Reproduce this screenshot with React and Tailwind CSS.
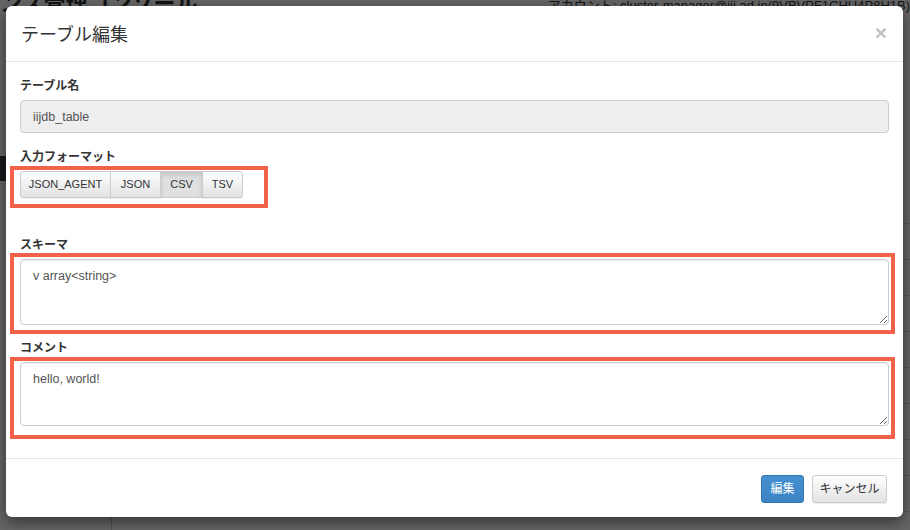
import React from 'react';

const font = { fontFamily: '"Liberation Sans", "Noto Sans CJK JP", sans-serif' };

const formats = [
  { name: 'JSON_AGENT', w: 'w-[91px]' },
  { name: 'JSON', w: 'w-[51px]' },
  { name: 'CSV', w: 'w-[43px]', active: true },
  { name: 'TSV', w: 'w-[41px]' },
];

// faded page that sits behind the modal backdrop
const BackgroundPage = () => (
  <div className="flex flex-col w-full h-full bg-white text-[#333]">
    <div className="flex justify-between items-start h-[40px]">
      <div className="-mt-[13px] text-[22px] font-bold whitespace-nowrap">ンス管理コンソール</div>
      <div className="-mt-[4px] text-[13px] whitespace-nowrap">
        アカウント: cluster-manager@iij.ad.jp(9VBVPF1CHU4P8H1B)
      </div>
    </div>
    <div className="flex flex-1">
      <div className="w-[112px] border-r border-[#ccc] flex flex-col pt-[116px]">
        <div className="h-[25px] bg-[#3a3f48]" />
      </div>
      <div className="flex-1 flex flex-col pt-[148px]">
        {Array.from({ length: 9 }).map((_, i) => (
          <div key={i} className="h-[36px] border-b border-[#ddd]" />
        ))}
      </div>
    </div>
  </div>
);

const Label = ({ children }) => (
  <label className="block text-[12px] font-bold leading-[18px] mb-[5px] text-[#333]">{children}</label>
);

export default function App() {
  return (
    <div className="relative w-[910px] h-[530px] overflow-hidden" style={font}>
      <BackgroundPage />
      <div className="absolute inset-0 bg-black/60" />

      <div className="absolute left-[6px] top-[6px] w-[897px] h-[511px] bg-white rounded-[6px] shadow-[0_5px_15px_rgba(0,0,0,0.5)] flex flex-col text-[#333]">
        {/* header */}
        <div className="h-[56px] px-[15px] flex items-center justify-between border-b border-[#e5e5e5]">
          <h4 className="text-[18px] leading-[20px] mt-[2px]">テーブル編集</h4>
          <button className="text-[21px] font-bold leading-none text-[#c2c2c2] mr-[1px] mt-[-3px]">×</button>
        </div>

        {/* body */}
        <div className="flex-1 px-[14px] pt-[15px]">
          <div className="mb-[15px]">
            <Label>テーブル名</Label>
            <input
              readOnly
              value="iijdb_table"
              className="w-full h-[33px] px-[12px] text-[12.5px] text-[#555] bg-[#eee] border border-[#ccc] rounded-[4px] outline-none"
              style={font}
            />
          </div>

          <div className="mb-[38px]">
            <Label>入力フォーマット</Label>
            <div className="flex">
              {formats.map((f, i) => (
                <button
                  key={f.name}
                  className={`${f.w} h-[27px] text-[11px] text-[#333] border border-[#ccc] -ml-px first:ml-0
                    ${i === 0 ? 'rounded-l-[3px]' : ''} ${i === formats.length - 1 ? 'rounded-r-[3px]' : ''}
                    ${f.active
                      ? 'bg-[#e0e0e0] border-[#c4c4c4] shadow-[inset_0_3px_5px_rgba(0,0,0,0.125)] relative z-10'
                      : 'bg-gradient-to-b from-white to-[#e2e2e2] shadow-[0_1px_1px_rgba(0,0,0,0.075)]'}`}
                >
                  {f.name}
                </button>
              ))}
            </div>
          </div>

          <div className="mb-[14px]">
            <Label>スキーマ</Label>
            <textarea
              readOnly
              defaultValue="v array<string>"
              className="block w-full h-[66px] px-[12px] py-[8px] text-[12.5px] leading-[17px] text-[#555] border border-[#ccc] rounded-[4px] outline-none shadow-[inset_0_1px_1px_rgba(0,0,0,0.075)]"
              style={font}
            />
          </div>

          <div>
            <Label>コメント</Label>
            <textarea
              readOnly
              defaultValue="hello, world!"
              className="block w-full h-[64px] px-[12px] py-[8px] text-[12.5px] leading-[17px] text-[#555] border border-[#ccc] rounded-[4px] outline-none shadow-[inset_0_1px_1px_rgba(0,0,0,0.075)]"
              style={font}
            />
          </div>
        </div>

        {/* footer */}
        <div className="h-[59px] border-t border-[#e5e5e5] px-[16px] pt-[16px] flex justify-end gap-[8px]">
          <button className="w-[43px] h-[28px] text-[12px] text-white bg-gradient-to-b from-[#4790cf] to-[#3b84c4] border border-[#3479b6] rounded-[3px]">
            編集
          </button>
          <button className="w-[75px] h-[28px] text-[12px] text-[#333] bg-gradient-to-b from-white to-[#e2e2e2] border border-[#ccc] rounded-[3px] shadow-[0_1px_1px_rgba(0,0,0,0.075)]">
            キャンセル
          </button>
        </div>

        {/* red annotation boxes drawn over the form */}
        <div className="absolute left-[4px] top-[160px] w-[258px] h-[42px] border-[4px] border-[#f26149] pointer-events-none" />
        <div className="absolute left-[4px] top-[247px] w-[885px] h-[81px] border-[4px] border-[#f26149] pointer-events-none" />
        <div className="absolute left-[4px] top-[351px] w-[885px] h-[82px] border-[4px] border-[#f26149] pointer-events-none" />
      </div>
    </div>
  );
}
